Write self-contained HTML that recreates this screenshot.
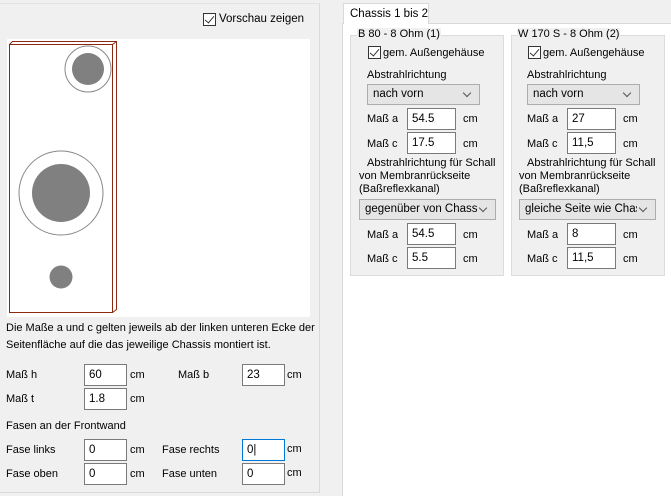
<!DOCTYPE html>
<html><head><meta charset="utf-8"><style>
*{box-sizing:border-box;margin:0;padding:0}
body{width:671px;height:496px;background:#f0f0f0;position:relative;overflow:hidden;font-family:"Liberation Sans",sans-serif;font-size:11px;color:#000}
.a{position:absolute;white-space:nowrap}
.in{position:absolute;background:#fff;border:1px solid #7a7a7a;height:22px;line-height:20px;padding:0 0 0 4px;font-size:11.5px;white-space:nowrap}
.cb{position:absolute;width:13px;height:13px;border:1px solid #333;background:#fff}
.cb:after{content:"";position:absolute;left:3px;top:0px;width:4px;height:8px;border:solid #333;border-width:0 1.5px 1.5px 0;transform:rotate(40deg)}
.gb{position:absolute;background:#f0f0f0;border:1px solid #dcdcdc}
.dd{position:absolute;background:#e5e5e5;border:1px solid #adadad;height:21px;line-height:19px;padding:0 0 0 5px;font-size:11.5px;white-space:nowrap;overflow:hidden}
.dd:after{content:"";position:absolute;right:9px;top:5px;width:5px;height:5px;border:solid #555;border-width:0 1px 1px 0;transform:rotate(45deg)}
.dd span{display:block;width:calc(100% - 18px);overflow:hidden}
</style></head><body>
<div class="a" style="left:0;top:3px;width:320px;height:490px;border-right:1px solid #dadada;border-bottom:1px solid #dadada;border-top:1px solid #e4e4e4"></div>
<div class="cb" style="left:203px;top:13px"></div>
<div class="a" style="left:219px;top:13px;font-size:11.5px">Vorschau zeigen</div>
<div class="a" style="left:7px;top:39px;width:303px;height:278px;background:#fff"></div>
<svg class="a" style="left:0;top:0" width="320" height="320">
<g fill="none" stroke="#8b2a10" stroke-width="1">
<rect x="9.5" y="44.5" width="103" height="268"/>
<path d="M9.5 44.5 L12.5 41.5 L116.5 41.5 L116.5 309.5 L112.5 312.5 M112.5 44.5 L116.5 41.5"/>
</g>
<circle cx="88" cy="69" r="23" fill="none" stroke="#888"/>
<circle cx="88" cy="69" r="16" fill="#808080"/>
<circle cx="61" cy="193" r="42" fill="none" stroke="#888"/>
<circle cx="61" cy="193" r="29" fill="#808080"/>
<circle cx="61" cy="277" r="11.5" fill="#808080"/>
</svg>
<div class="a" style="left:6px;top:322px">Die Maße a und c gelten jeweils ab der linken unteren Ecke der</div>
<div class="a" style="left:6px;top:339px">Seitenfläche auf die das jeweilige Chassis montiert ist.</div>
<div class="a" style="left:6px;top:369px">Maß h</div><div class="in" style="left:84px;top:364px;width:43px">60</div><div class="a" style="left:130px;top:369px">cm</div>
<div class="a" style="left:178px;top:369px">Maß b</div><div class="in" style="left:242px;top:364px;width:43px">23</div><div class="a" style="left:287px;top:369px">cm</div>
<div class="a" style="left:6px;top:393px">Maß t</div><div class="in" style="left:84px;top:388px;width:43px">1.8</div><div class="a" style="left:130px;top:393px">cm</div>
<div class="a" style="left:6px;top:420px">Fasen an der Frontwand</div>
<div class="a" style="left:6px;top:444px">Fase links</div><div class="in" style="left:84px;top:439px;width:43px">0</div><div class="a" style="left:130px;top:444px">cm</div>
<div class="a" style="left:162px;top:444px">Fase rechts</div><div class="in" style="left:242px;top:439px;width:43px;border-color:#0078d7">0|</div><div class="a" style="left:287px;top:443px">cm</div>
<div class="a" style="left:6px;top:468px">Fase oben</div><div class="in" style="left:84px;top:463px;width:43px">0</div><div class="a" style="left:130px;top:468px">cm</div>
<div class="a" style="left:162px;top:468px">Fase unten</div><div class="in" style="left:242px;top:463px;width:43px">0</div><div class="a" style="left:287px;top:467px">cm</div>

<div class="a" style="left:342px;top:23px;width:329px;height:473px;background:#fff;border-left:1px solid #d9d9d9;border-top:1px solid #d9d9d9"></div>
<div class="a" style="left:343px;top:3px;width:86px;height:21px;background:#fff;border:1px solid #d9d9d9;border-bottom:none;padding:4px 0 0 6px;font-size:11.5px">Chassis 1 bis 2</div>

<div class="gb" style="left:350px;top:35px;width:154px;height:241px"></div>
<div class="a" style="left:357px;top:28px;background:#f0f0f0;padding:0 1px">B 80 - 8 Ohm (1)</div>
<div class="cb" style="left:368px;top:46px"></div><div class="a" style="left:383px;top:47px">gem. Außengehäuse</div>
<div class="a" style="left:367px;top:69px">Abstrahlrichtung</div>
<div class="dd" style="left:367px;top:84px;width:113px"><span>nach vorn</span></div>
<div class="a" style="left:367px;top:113px">Maß a</div><div class="in" style="left:407px;top:108px;width:49px">54.5</div><div class="a" style="left:463px;top:113px">cm</div>
<div class="a" style="left:367px;top:138px">Maß c</div><div class="in" style="left:407px;top:132px;width:49px">17.5</div><div class="a" style="left:463px;top:138px">cm</div>
<div class="a" style="left:367px;top:157px">Abstrahlrichtung für Schall</div>
<div class="a" style="left:359px;top:170px">von Membranrückseite</div>
<div class="a" style="left:359px;top:183px">(Baßreflexkanal)</div>
<div class="dd" style="left:359px;top:199px;width:137px"><span>gegenüber von Chassis</span></div>
<div class="a" style="left:367px;top:229px">Maß a</div><div class="in" style="left:407px;top:223px;width:49px">54.5</div><div class="a" style="left:463px;top:229px">cm</div>
<div class="a" style="left:367px;top:253px">Maß c</div><div class="in" style="left:407px;top:247px;width:49px">5.5</div><div class="a" style="left:463px;top:253px">cm</div>

<div class="gb" style="left:511px;top:35px;width:154px;height:241px"></div>
<div class="a" style="left:517px;top:28px;background:#f0f0f0;padding:0 1px">W 170 S - 8 Ohm (2)</div>
<div class="cb" style="left:528px;top:46px"></div><div class="a" style="left:543px;top:47px">gem. Außengehäuse</div>
<div class="a" style="left:527px;top:69px">Abstrahlrichtung</div>
<div class="dd" style="left:527px;top:84px;width:113px"><span>nach vorn</span></div>
<div class="a" style="left:527px;top:113px">Maß a</div><div class="in" style="left:567px;top:108px;width:49px">27</div><div class="a" style="left:623px;top:113px">cm</div>
<div class="a" style="left:527px;top:138px">Maß c</div><div class="in" style="left:567px;top:132px;width:49px">11,5</div><div class="a" style="left:623px;top:138px">cm</div>
<div class="a" style="left:527px;top:157px">Abstrahlrichtung für Schall</div>
<div class="a" style="left:519px;top:170px">von Membranrückseite</div>
<div class="a" style="left:519px;top:183px">(Baßreflexkanal)</div>
<div class="dd" style="left:519px;top:199px;width:137px"><span>gleiche Seite wie Chassi</span></div>
<div class="a" style="left:527px;top:229px">Maß a</div><div class="in" style="left:567px;top:223px;width:49px">8</div><div class="a" style="left:623px;top:229px">cm</div>
<div class="a" style="left:527px;top:253px">Maß c</div><div class="in" style="left:567px;top:247px;width:49px">11,5</div><div class="a" style="left:623px;top:253px">cm</div>
</body></html>
